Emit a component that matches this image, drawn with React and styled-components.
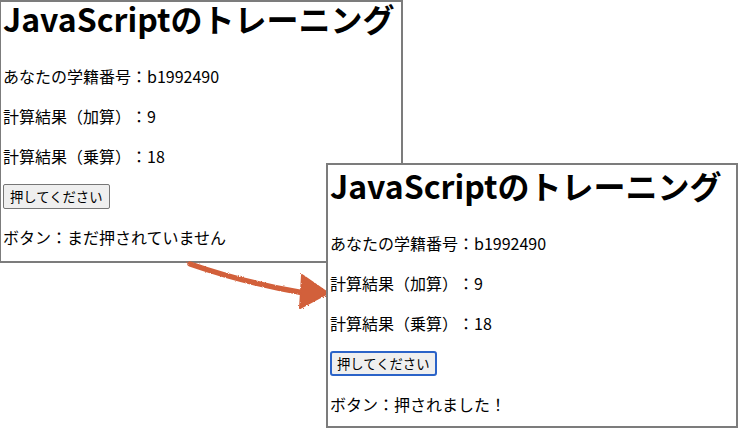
import React from "react";
import styled, { createGlobalStyle } from "styled-components";

const GlobalStyle = createGlobalStyle`
  html, body {
    margin: 0;
    padding: 0;
    background: #fff;
  }
  body {
    font-family: "Noto Sans CJK JP", "Noto Sans", sans-serif;
    color: #000;
    text-spacing-trim: space-all;
  }
`;

function TrainingPage({ pressed, shift }) {
    return (
        <Panel $shift={shift}>
            <Title>JavaScriptのトレーニング</Title>
            <Line>あなたの学籍番号：b1992490</Line>
            <Line>計算結果（加算）：9</Line>
            <Line>計算結果（乗算）：18</Line>
            <PushButton type="button" $focused={pressed}>押してください</PushButton>
            <Line>{pressed ? "ボタン：押されました！" : "ボタン：まだ押されていません"}</Line>
        </Panel>
    );
}

export default function App() {
    return (
        <>
            <GlobalStyle />
            <Canvas>
                <Shot $left={-1} $top={0} $width={404} $height={263}>
                    <TrainingPage pressed={false} shift={-4} />
                </Shot>
                <Arrow viewBox="0 0 739 428" aria-hidden="true">
                    <defs>
                        <filter id="chalk" x="-10%" y="-10%" width="120%" height="120%">
                            <feTurbulence type="fractalNoise" baseFrequency="0.9" numOctaves="2" seed="3" />
                            <feDisplacementMap in="SourceGraphic" scale="2.5" />
                        </filter>
                    </defs>
                    <g filter="url(#chalk)" fill="#d2603b" stroke="#d2603b">
                        <path d="M190 264 Q 245 283 304 293" fill="none" strokeWidth="5.5" strokeLinecap="round" />
                        <polygon points="302,275 328,293 300,308" strokeWidth="2" strokeLinejoin="round" />
                    </g>
                </Arrow>
                <Shot $left={326} $top={163} $width={412} $height={265}>
                    <TrainingPage pressed={true} shift={0} />
                </Shot>
            </Canvas>
        </>
    );
}

// estilos
const Canvas = styled.div`
    position: relative;
    width: 739px;
    height: 428px;
    overflow: hidden;
    background: #fff;
`;

const Shot = styled.section`
    position: absolute;
    left: ${(p) => p.$left}px;
    top: ${(p) => p.$top}px;
    width: ${(p) => p.$width}px;
    height: ${(p) => p.$height}px;
    box-sizing: border-box;
    border: 2px solid #7c7c7c;
    background: #fff;
    overflow: hidden;
`;

const Panel = styled.div`
    padding: 0 2px;
    margin-top: ${(p) => p.$shift}px;
`;

const Title = styled.h1`
    margin: 0 0 26px;
    font-size: 32px;
    line-height: 40px;
    font-weight: 700;
    white-space: nowrap;
`;

const Line = styled.p`
    margin: 16px 0;
    font-size: 16px;
    line-height: 24px;
    white-space: nowrap;
`;

const PushButton = styled.button`
    display: block;
    font-family: "Noto Sans CJK JP", sans-serif;
    font-size: 13.33px;
    line-height: 19px;
    color: #000;
    background: #efefef;
    border: ${(p) => (p.$focused ? "2px solid #2b63c8" : "1px solid #767676")};
    border-radius: ${(p) => (p.$focused ? "3px" : "2px")};
    padding: ${(p) => (p.$focused ? "1px 5px" : "2px 6px")};
    text-spacing-trim: space-all;
    cursor: pointer;
`;

const Arrow = styled.svg`
    position: absolute;
    left: 0;
    top: 0;
    width: 739px;
    height: 428px;
    pointer-events: none;
`;
